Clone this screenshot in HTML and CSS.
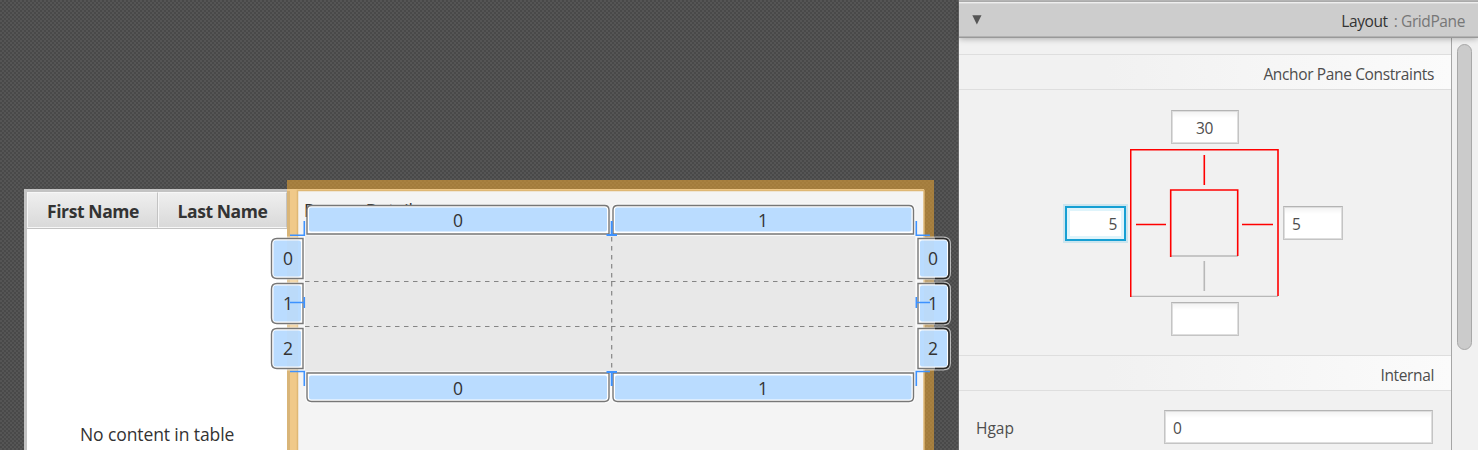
FILE: index.html
```html
<!DOCTYPE html>
<html lang="en">
<head>
<meta charset="utf-8">
<title>Layout editor</title>
<link rel="stylesheet" href="styles.css">
</head>
<body>
<div class="app">
  <main class="canvas">
    <section class="table">
      <div class="table-head">
        <div class="column"><span>First Name</span></div>
        <div class="column last"><span>Last Name</span></div>
      </div>
      <div class="placeholder"><span>No content in table</span></div>
    </section>
    <section class="details"><span class="details-label">Person Details:</span></section>
    <svg class="overlay" width="958" height="450" viewBox="0 0 958 450">
      <!-- selected parent ring -->
      <path class="ring" d="M287 180H934V450H924V191H298V450H287Z"/>
      <path class="ring-edge" d="M297.500 450V190.500H924V450"/>
      <path class="ring-edge soft" d="M288.500 191V450"/>
      <rect class="grid-fill" x="305" y="236" width="610" height="136"/>
      <path class="grid-line" d="M305 281.500H915M305 326.500H915M611.700 237V371"/>
      <!-- column and row tabs -->
      <g class="halo">
        <path d="M613 234V210Q613 205.500 617.500 205.500H909Q913.500 205.500 913.500 210V234Z"/>
        <path d="M307 373V397Q307 401.500 311.500 401.500H604.500Q609 401.500 609 397V373Z"/>
        <path d="M613 373V397Q613 401.500 617.500 401.500H909Q913.500 401.500 913.500 397V373Z"/>
        <path d="M303 238.500H277Q271.500 238.500 271.500 244V273Q271.500 278.500 277 278.500H303Z"/>
        <path d="M303 283.500H277Q271.500 283.500 271.500 289V318Q271.500 323.500 277 323.500H303Z"/>
        <path d="M303 328.500H277Q271.500 328.500 271.500 334V363Q271.500 368.500 277 368.500H303Z"/>
        <path d="M918 238.500H943.500Q949 238.500 949 244V273Q949 278.500 943.500 278.500H918Z"/>
        <path d="M918 283.500H943.500Q949 283.500 949 289V318Q949 323.500 943.500 323.500H918Z"/>
        <path d="M918 328.500H943.500Q949 328.500 949 334V363Q949 368.500 943.500 368.500H918Z"/>
      </g>
      <g class="tab">
        <path d="M307 234V210Q307 205.500 311.500 205.500H604.500Q609 205.500 609 210V234Z"/>
        <path d="M613 234V210Q613 205.500 617.500 205.500H909Q913.500 205.500 913.500 210V234Z"/>
        <path d="M307 373V397Q307 401.500 311.500 401.500H604.500Q609 401.500 609 397V373Z"/>
        <path d="M613 373V397Q613 401.500 617.500 401.500H909Q913.500 401.500 913.500 397V373Z"/>
        <path d="M303 238.500H277Q271.500 238.500 271.500 244V273Q271.500 278.500 277 278.500H303Z"/>
        <path d="M303 283.500H277Q271.500 283.500 271.500 289V318Q271.500 323.500 277 323.500H303Z"/>
        <path d="M303 328.500H277Q271.500 328.500 271.500 334V363Q271.500 368.500 277 368.500H303Z"/>
        <path d="M918 238.500H943.500Q949 238.500 949 244V273Q949 278.500 943.500 278.500H918Z"/>
        <path d="M918 283.500H943.500Q949 283.500 949 289V318Q949 323.500 943.500 323.500H918Z"/>
        <path d="M918 328.500H943.500Q949 328.500 949 334V363Q949 368.500 943.500 368.500H918Z"/>
      </g>
      <g class="tab-dark">
        <path d="M935 238.500H943.500Q949 238.500 949 244V273Q949 278.500 943.500 278.500H935"/>
        <path d="M935 283.500H943.500Q949 283.500 949 289V318Q949 323.500 943.500 323.500H935"/>
        <path d="M935 328.500H943.500Q949 328.500 949 334V363Q949 368.500 943.500 368.500H935"/>
      </g>
      <g class="tab-inner">
        <rect x="309" y="207.500" width="298" height="24" rx="2"/>
        <rect x="615" y="207.500" width="296.500" height="24" rx="2"/>
        <rect x="309" y="375.500" width="298" height="24" rx="2"/>
        <rect x="615" y="375.500" width="296.500" height="24" rx="2"/>
        <rect x="273.500" y="240.500" width="27.500" height="36" rx="2"/>
        <rect x="273.500" y="285.500" width="27.500" height="36" rx="2"/>
        <rect x="273.500" y="330.500" width="27.500" height="36" rx="2"/>
        <rect x="920" y="240.500" width="27" height="36" rx="2"/>
        <rect x="920" y="285.500" width="27" height="36" rx="2"/>
        <rect x="920" y="330.500" width="27" height="36" rx="2"/>
      </g>
      <!-- faint parent bands showing through the row tabs -->
      <path class="band" d="M287 240H298V277H287ZM287 285H298V322H287ZM287 330H298V367H287ZM924 240H934V277H924ZM924 285H934V322H924ZM924 330H934V367H924Z"/>
      <g class="tab-label">
        <text x="458" y="227">0</text><text x="763" y="227">1</text>
        <text x="458" y="395">0</text><text x="763" y="395">1</text>
        <text x="288" y="265">0</text><text x="288" y="310">1</text><text x="288" y="355">2</text>
        <text x="933" y="265">0</text><text x="933" y="310">1</text><text x="933" y="355">2</text>
      </g>
      <!-- gap and corner handles -->
      <path class="handle" d="M290 235.200H304.300V221M290 371.500H304.300V386M930 235.200H916.300V221M930 371.500H916.300V386M290 302.500H304M916 302.500H930M304.300 297V308M916.300 297V308"/>
      <path class="handle thick" d="M606.500 235H617M606.500 372H617M611.700 221V235M611.700 372V386"/>
    </svg>
  </main>
  <aside class="inspector">
    <header class="title-bar">
      <svg class="arrow" width="10" height="10" viewBox="0 0 10 10"><path d="M.3.300H9.500L4.900 9.500Z"/></svg>
      <div class="title"><span class="title-name">Layout</span><span class="title-type">: GridPane</span></div>
    </header>
    <div class="inspector-body">
      <div class="sections">
        <h2 class="section-head"><span>Anchor Pane Constraints</span></h2>
        <div class="anchor">
          <div class="field top">30</div>
          <div class="field left focused">5</div>
          <svg class="anchor-figure" width="149" height="148" viewBox="0 0 149 148">
            <path class="off" d="M1 147.500H148M41 107H108M74.300 112V142"/>
            <path class="on" d="M.700 148V.700H148V147M40.700 108V41H107.700V107M74.300 6V36M6 75.500H36M112 75.500H143"/>
          </svg>
          <div class="field right">5</div>
          <div class="field bottom"></div>
        </div>
        <h2 class="section-head"><span>Internal</span></h2>
        <div class="property"><label>Hgap</label><div class="field hgap">0</div></div>
      </div>
      <div class="scrollbar"><div class="thumb"></div></div>
    </div>
  </aside>
</div>
</body>
</html>
```

FILE: styles.css
```css
* { box-sizing: border-box; }
body { margin: 0; overflow: hidden; font-family: "Open Sans", "Noto Sans", sans-serif; color: #333; }
.app { display: flex; width: 1478px; height: 450px; }

.canvas {
  position: relative;
  display: flex;
  width: 958px;
  padding: 189px 0 0 24px;
  background: repeating-conic-gradient(#494949 0 25%, #555 0 50%) 0 0 / 4px 4px;
}
.table { display: flex; flex-direction: column; width: 263px; border: solid #c3c3c3; border-width: 3px 0 0 3px; background: #fff; }
.table-head { display: flex; height: 37px; border-bottom: 1px solid #c3c3c3; }
.column {
  display: flex; align-items: center; justify-content: center;
  width: 131px; padding: 2px 0 0 1px;
  border: 1px solid #f7f7f7; border-right: 1px solid #c3c3c3;
  background: linear-gradient(#efefef, #d9d9d9);
  font-size: 17.500px; font-weight: 700; white-space: nowrap; letter-spacing: -.4px;
}
.column.last { width: 129px; padding-left: 0; }
.placeholder { padding: 193px 0 0 53px; font-size: 17.500px; line-height: 24px; letter-spacing: -.1px; white-space: nowrap; }
.details { width: 637px; padding: 9px 0 0 17px; background: #f4f4f4; font-size: 17.500px; line-height: 24px; }
.overlay { position: absolute; inset: 0; }
.ring { fill: rgba(236, 166, 50, .55); }
.ring-edge { fill: none; stroke: #dfb875; stroke-width: 1.500; }
.ring-edge.soft { stroke: #d9b578; stroke-width: 3; }
.grid-fill { fill: #e8e8e8; }
.grid-line { fill: none; stroke: #858585; stroke-width: 1.200; stroke-dasharray: 4.500 4.500; }
.halo { fill: none; stroke: rgba(255, 255, 255, .6); stroke-width: 4; }
.tab { fill: #fff; stroke: #777; stroke-width: 1.400; }
.tab-dark { fill: none; stroke: #292929; stroke-width: 1.500; }
.tab-inner { fill: #badcff; }
.band { fill: rgba(236, 166, 50, .03); }
.tab-label { font-size: 17.500px; text-anchor: middle; fill: #333; }
.handle { fill: none; stroke: #3d92ff; stroke-width: 1.600; }
.handle.thick { stroke-width: 2; }

.inspector { display: flex; flex-direction: column; width: 520px; border-left: 1px solid #686868; background: #f1f1f1; color: #4d4d4d; }
.title-bar {
  position: relative; z-index: 1;
  display: flex; flex: none; align-items: center; justify-content: space-between;
  height: 38px; padding: 3px 13px 1px;
  background: linear-gradient(#b4b4b4 0 1px, #aaa 1px 2px, #eee 2px 3px, #dadada 3px 4px, #cdcdcd 4px 36px, #b2b2b2 36px 37px, #999 37px);
  box-shadow: 0 1px 6px rgba(0, 0, 0, .28);
}
.arrow { fill: #555; }
.title { display: flex; gap: 6px; padding-top: 1px; font-size: 15.500px; letter-spacing: -.4px; white-space: nowrap; }
.title-name { color: #333; }
.title-type { color: #777; }
.inspector-body { display: flex; flex: 1; min-height: 0; }
.sections { width: 493px; padding-top: 16px; border-right: 1px solid #a6a6a6; overflow: hidden; }
.section-head {
  display: flex; align-items: center; justify-content: flex-end;
  height: 36px; margin: 0; padding: 4px 17px 0 0;
  border: solid #dedede; border-width: 1px 0;
  background: linear-gradient(90deg, #f1f1f1 30%, #fbfbfb);
  font-size: 15.500px; font-weight: 400; letter-spacing: -.36px; white-space: nowrap;
}
.anchor {
  display: grid; grid-template-columns: 61px 149px 60px; grid-template-rows: 34px 148px 34px;
  column-gap: 4px; row-gap: 5px; align-items: center;
  height: 265px; padding: 20px 0 19px 106px;
}
.field {
  display: flex; align-items: center; height: 34px; padding: 2px 8px 0;
  border: 1px solid #c4c4c4; border-top-color: #b4b4b4;
  background: linear-gradient(#f1f1f1, #fff 7px); box-shadow: inset 0 0 0 1px #dedede; font-size: 15.500px; letter-spacing: -.4px;
}
.top, .bottom { grid-column: 2; justify-self: center; width: 68px; justify-content: center; position: relative; }
.left { grid-column: 1; justify-content: flex-end; height: 35px; }
.right { grid-column: 3; }
.focused { padding-right: 7px; border: 2px solid #169fd3; background: #fff; box-shadow: 0 0 0 2px #cce5ee, inset 0 0 0 3px #dff4fb; }
.anchor-figure { fill: none; stroke-width: 1.600; }
.on { stroke: #f00; }
.off { stroke: #b8b8b8; }
.property { display: flex; align-items: center; padding: 19px 0 0 17px; font-size: 15.500px; }
.property label { width: 188px; padding-top: 2px; }
.hgap { width: 269px; }
.scrollbar { width: 26px; padding: 6px 0 0 5px; }
.thumb { width: 15px; height: 306px; border: 1.500px solid #a8a8a8; border-radius: 8px; background: #cbcbcb; }
```
